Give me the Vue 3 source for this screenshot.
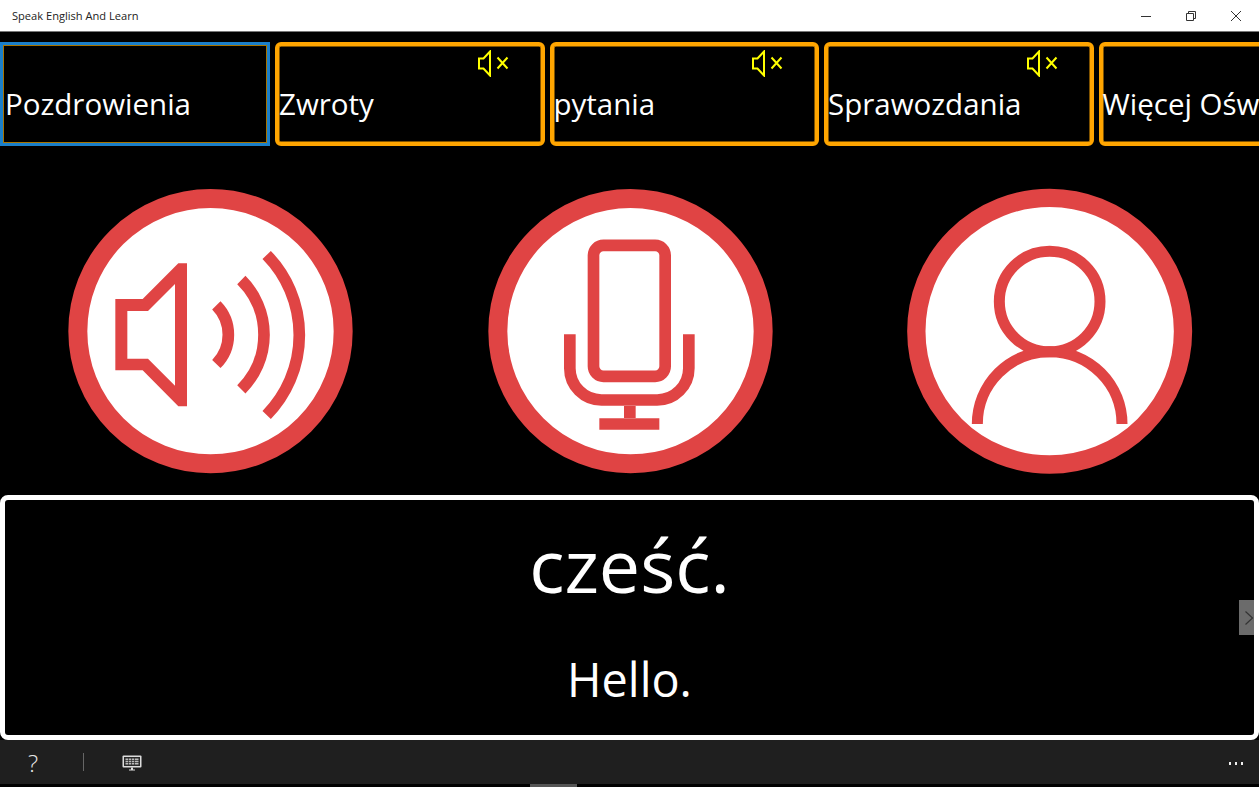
<script setup>
const tiles = [
  { label: 'Pozdrowienia', muted: false },
  { label: 'Zwroty', muted: true },
  { label: 'pytania', muted: true },
  { label: 'Sprawozdania', muted: true },
  { label: 'Więcej Oświadczeń', muted: false }
]
</script>

<template>
  <div class="page">
    <header class="title-bar">
      <span class="title">Speak English And Learn</span>
      <div class="window-buttons">
        <svg width="12" height="12" viewBox="0 0 12 12"><path d="M1 6.5h10" stroke="#333" fill="none" /></svg>
        <svg width="12" height="12" viewBox="0 0 12 12"><path d="M1.5 3.5h7v7h-7zM3.5 3.5v-2h7v7h-2" stroke="#333" fill="none" /></svg>
        <svg width="12" height="12" viewBox="0 0 12 12"><path d="M1 1l10 10M11 1L1 11" stroke="#333" fill="none" /></svg>
      </div>
    </header>

    <main class="content">
      <div class="tiles">
        <div v-for="(tile, i) in tiles" :key="tile.label" class="tile" :class="{ active: i === 0 }">
          <span class="tile-label">{{ tile.label }}</span>
          <svg v-if="tile.muted" class="mute" width="31" height="27" viewBox="0 0 31 27">
            <path d="M1 8.500h4.500L12 1.500v24l-6.500-7H1z" fill="none" stroke="#ffff00" stroke-width="2" />
            <path d="M19.500 7.500l10 11M29.500 7.500l-10 11" fill="none" stroke="#ffff00" stroke-width="2" />
          </svg>
        </div>
      </div>

      <div class="actions">
        <svg class="action" viewBox="0 0 900 900">
          <circle cx="451.500" cy="453.500" r="398" fill="#fff" stroke="#e04444" stroke-width="57" />
          <path fill="#e04444" fill-rule="evenodd" d="M166 357h82L355 250h26v429h-26L248 571h-82zM202 393v143h62l81 81V312l-81 81z" />
          <g fill="none" stroke="#e04444" stroke-width="35">
            <path d="M469 376A125.500 125.500 0 0 1 469 552" />
            <path d="M544 300A231.800 231.800 0 0 1 544 628" />
            <path d="M620 225A343 343 0 0 1 620 705" />
          </g>
        </svg>
        <svg class="action" viewBox="0 0 900 900">
          <circle cx="451.500" cy="453.500" r="398" fill="#fff" stroke="#e04444" stroke-width="57" />
          <g fill="none" stroke="#e04444" stroke-width="35">
            <rect x="340.500" y="196" width="215" height="393" rx="30" />
            <path d="M269.500 463v102a95 95 0 0 0 95 95h167a95 95 0 0 0 95-95V463" />
            <path d="M449.500 678v36" />
            <path d="M358 732h180" />
          </g>
        </svg>
        <svg class="action" viewBox="0 0 900 900">
          <circle cx="449" cy="453.500" r="400" fill="#fff" stroke="#e04444" stroke-width="55" />
          <g fill="none" stroke="#e04444" stroke-width="33">
            <circle cx="449" cy="364.500" r="151" />
            <path d="M232 732A217 217 0 0 1 666 732" />
          </g>
        </svg>
      </div>

      <section class="card">
        <p class="phrase">cześć.</p>
        <p class="translation">Hello.</p>
        <div class="next">
          <svg width="10" height="16" viewBox="0 0 10 16"><path d="M1.500 1.500l7 6.500-7 6.500" fill="none" stroke="#333" stroke-width="1.200" /></svg>
        </div>
      </section>
    </main>

    <footer class="app-bar">
      <span class="help">?</span>
      <span class="divider"></span>
      <svg class="keyboard" width="20" height="16" viewBox="0 0 20 16">
        <rect x="0.500" y="0.500" width="19" height="12" rx="1" fill="#ddd" />
        <rect x="2" y="2" width="16" height="9" fill="#2a2a2a" />
        <path d="M3.500 3.500h13v6h-13z" fill="#bbb" />
        <path d="M3 5.500h14M3 7.500h14M6.500 3v7M9.500 3v7M12.500 3v7" stroke="#2a2a2a" stroke-width="0.700" />
        <path d="M7 15.500h6v-1H11v-2H9v2H7z" fill="#ddd" />
      </svg>
      <span class="more"><i></i><i></i><i></i></span>
    </footer>
    <div class="handle-strip"><span class="handle"></span></div>
  </div>
</template>

<style scoped>
.page {
  display: flex;
  flex-direction: column;
  width: 1259px;
  height: 787px;
  overflow: hidden;
  background: #000;
  font-family: "Open Sans", "Noto Sans", sans-serif;
  color: #fff;
}

.title-bar {
  display: flex;
  justify-content: space-between;
  align-items: center;
  flex: none;
  height: 31px;
  box-sizing: content-box;
  background: #fff;
  border-bottom: 1px solid #777;
}

.title {
  margin-left: 12px;
  font-size: 11.100px;
  color: #222;
}

.window-buttons {
  display: flex;
  gap: 33px;
  margin-right: 17px;
}

.content {
  display: flex;
  flex-direction: column;
  flex: 1;
  min-height: 0;
}

.tiles {
  display: flex;
  gap: 5px;
  flex: none;
  margin-top: 10px;
  padding-left: 0.500px;
}

.tile {
  position: relative;
  display: flex;
  align-items: center;
  flex: none;
  width: 269.500px;
  height: 104px;
  box-sizing: border-box;
  padding: 20px 0 0 0;
  border: 4px solid #ffa500;
  border-radius: 6px;
  box-shadow: inset 0 0 0 0.500px #ffa500;
  white-space: nowrap;
}

.tile.active {
  margin-left: -0.500px;
  width: 270px;
  padding-left: 2px;
  border: 3px solid #1b7fc9;
  border-radius: 0;
  box-shadow: inset 0 0 0 1px #a87400;
}

.tile-label {
  font-size: 29.500px;
  line-height: 40px;
}

.mute {
  position: absolute;
  top: 4px;
  left: 198.500px;
}

.actions {
  display: grid;
  grid-template-columns: repeat(3, 420px);
  justify-items: center;
  flex: none;
  margin-top: 34px;
}

.action {
  display: block;
  width: 300px;
  height: 300px;
}

.card {
  position: relative;
  display: flex;
  flex-direction: column;
  align-items: center;
  flex: none;
  height: 245px;
  box-sizing: border-box;
  margin-top: 15px;
  border: 5px solid #fff;
  border-radius: 8px;
}

.phrase {
  margin: 20px 0 0;
  font-size: 73.600px;
  line-height: 90px;
}

.translation {
  margin: 38px 0 0;
  font-size: 46.800px;
  line-height: 62px;
}

.next {
  position: absolute;
  top: 100px;
  right: 0;
  display: flex;
  align-items: center;
  justify-content: flex-end;
  width: 15px;
  height: 35px;
  background: #6b6b6b;
}

.app-bar {
  display: flex;
  align-items: center;
  flex: none;
  height: 44px;
  background: #1f1f1f;
}

.help {
  width: 13px;
  margin-left: 28px;
  font-size: 24px;
  font-weight: 300;
  color: #e6e6e6;
}

.divider {
  width: 1px;
  height: 18px;
  margin-left: 42px;
  background: #666;
}

.keyboard {
  margin-left: 38px;
  margin-top: 1px;
}

.more {
  display: flex;
  gap: 3.500px;
  margin-left: auto;
  margin-right: 16px;
  margin-top: 3px;
}

.more i {
  width: 2.500px;
  height: 2.500px;
  background: #eee;
}

.handle-strip {
  display: flex;
  flex: none;
  height: 3px;
  background: #000;
}

.handle {
  width: 47px;
  margin-left: 530px;
  background: #555;
}
</style>
